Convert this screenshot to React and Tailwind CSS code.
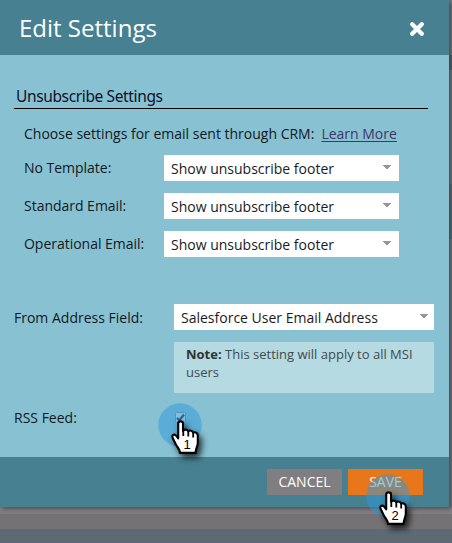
import React from "react";

function SelectBox({ value, className }) {
  return (
    <div className={`flex h-[26px] shrink-0 items-center justify-between bg-white pl-[7px] text-[14px] leading-[26px] text-[#1b1b22] ${className}`}>
      <span className="pt-[2px]">{value}</span>
      <svg width="8" height="4" viewBox="0 0 8 4" className="-mt-[2px]" shapeRendering="crispEdges">
        <path d="M0 0H8V1H7V2H6V3H5V4H3V3H2V2H1V1H0Z" fill="#969696" />
      </svg>
    </div>
  );
}

function Row({ label }) {
  return (
    <div className="flex h-[26px] items-center">
      <span className="w-[140px] shrink-0 text-[14px] leading-[26px] tracking-[-0.02px]">{label}</span>
      <SelectBox value="Show unsubscribe footer" className="w-[235px] pr-2" />
    </div>
  );
}

function Pointer({ step, className }) {
  return (
    <svg className={`pointer-events-none absolute overflow-visible ${className}`} width="44" height="54" viewBox="0 0 44 54">
      <circle cx="22" cy="22" r="21.7" fill="#2d98d9" fillOpacity="0.5" />
      <g className="drop-shadow-[3px_4px_3px_rgba(0,0,0,0.75)]">
        <path
          d="M20.2 20.6c0-3 4.8-3 4.8 0v7.2c1.2-1.7 4.6-1.5 5.3.5 1.3-1.3 4.3-.8 4.9 1.3 2-.9 4.6.4 4.6 2.9v7c0 4-2.2 5.3-2.2 10.4H21.9c0-4.3-2.8-5.4-4.2-8.7l-3-6.2c-1.6-3.3 2.1-4.5 3.7-2l1.8 2.5Z"
          fill="#fff"
          stroke="#000"
          strokeWidth="2.1"
          strokeLinejoin="round"
        />
        <path d="M25.3 27.5v5.5M30.3 28.5v5M35.2 30v4.4" stroke="#000" strokeWidth="1.8" />
      </g>
      <text x="29" y="46" textAnchor="middle" fontFamily="Liberation Sans, sans-serif" fontSize="13" fill="#000">
        {step}
      </text>
    </svg>
  );
}

export default function App() {
  return (
    <div className="relative h-[543px] w-[452px] overflow-hidden bg-[#757275] font-['Open_Sans',sans-serif] text-[#10191f]">
      <div className="flex h-[507px]">
        <main className="relative z-10 flex w-[449px] shrink-0 flex-col bg-[#88c1d2] shadow-[2px_2px_4px_rgba(0,0,0,0.35)]">
          <header className="flex h-[55px] shrink-0 items-center justify-between bg-[#468091] pl-[19px] pr-[25px]">
            <h1 className="text-[24px] leading-[55px] text-white">Edit Settings</h1>
            <svg width="14" height="14" viewBox="0 0 14 14" className="mt-[3px]">
              <path d="M2.2 2.2L11.8 11.8M11.8 2.2L2.2 11.8" stroke="#fff" strokeWidth="4.2" strokeLinecap="round" />
            </svg>
          </header>
          <section className="flex h-[402px] shrink-0 flex-col pl-[14px]">
            <h2 className="mt-[31px] h-[23px] w-[414px] border-b border-black pl-[2px] font-['Noto_Sans',sans-serif] text-[15.5px] leading-[21px] tracking-[-0.37px] text-[#0d1228]">
              Unsubscribe Settings
            </h2>
            <div className="flex flex-col gap-3 pl-[10px]">
              <p className="mt-[15px] h-[19px] text-[14px] leading-[19px]">
                Choose settings for email sent through CRM:
                <a className="ml-[7px] text-[#3d3867] underline underline-offset-2">Learn More</a>
              </p>
              <Row label="No Template:" />
              <Row label="Standard Email:" />
              <Row label="Operational Email:" />
            </div>
            <div className="mt-[47px] flex h-[26px] items-center">
              <span className="w-[160px] shrink-0 text-[14px]">From Address Field:</span>
              <SelectBox value="Salesforce User Email Address" className="w-[260px] pr-[6px]" />
            </div>
            <p className="ml-[160px] mt-3 h-[51px] w-[260px] bg-[#b5dae1] pl-[12px] pr-2 pt-[3px] text-[13px] leading-[18px] text-[#414b51]">
              <b className="text-[#303336]">Note:</b> This setting will apply to all MSI users
            </p>
            <div className="mt-[14px] flex h-[20px] items-center">
              <span className="w-[161px] shrink-0 text-[14px]">RSS Feed:</span>
              <svg width="11" height="11" viewBox="0 0 11 11">
                <rect x=".5" y=".5" width="10" height="10" rx="1" fill="#d9e4ec" stroke="#8193a1" />
                <path d="M2 6L4.3 8.3L9 2.5" fill="none" stroke="#19304b" strokeWidth="2.2" />
              </svg>
            </div>
          </section>
          <footer className="flex h-[50px] shrink-0 items-start justify-end gap-[6px] bg-[#468091] pr-[26px] pt-3 text-[14px] leading-[26px] text-white">
            <button className="h-[26px] w-[75px] bg-[#807e80]">CANCEL</button>
            <button className="h-[26px] w-[75px] bg-[#e8771b]">SAVE</button>
          </footer>
        </main>
        <aside className="flex w-[3px] flex-col bg-[#757275]">
          <div className="h-[55px]" />
          <div className="h-[15px] bg-[#605e64]" />
          <div className="h-[114px]" />
          <div className="h-[15px] bg-[#69676b]" />
          <div className="h-[40px] bg-[#5d6a74]" />
        </aside>
      </div>
      <div className="h-[7px] bg-[#807e81]" />
      <div className="h-[15px] bg-[#757275]" />
      <div className="h-[14px] bg-[#5d6a74]" />
      <Pointer step="1" className="left-[158px] top-[403px] z-20" />
      <Pointer step="2" className="left-[366px] top-[474px] z-20" />
    </div>
  );
}
